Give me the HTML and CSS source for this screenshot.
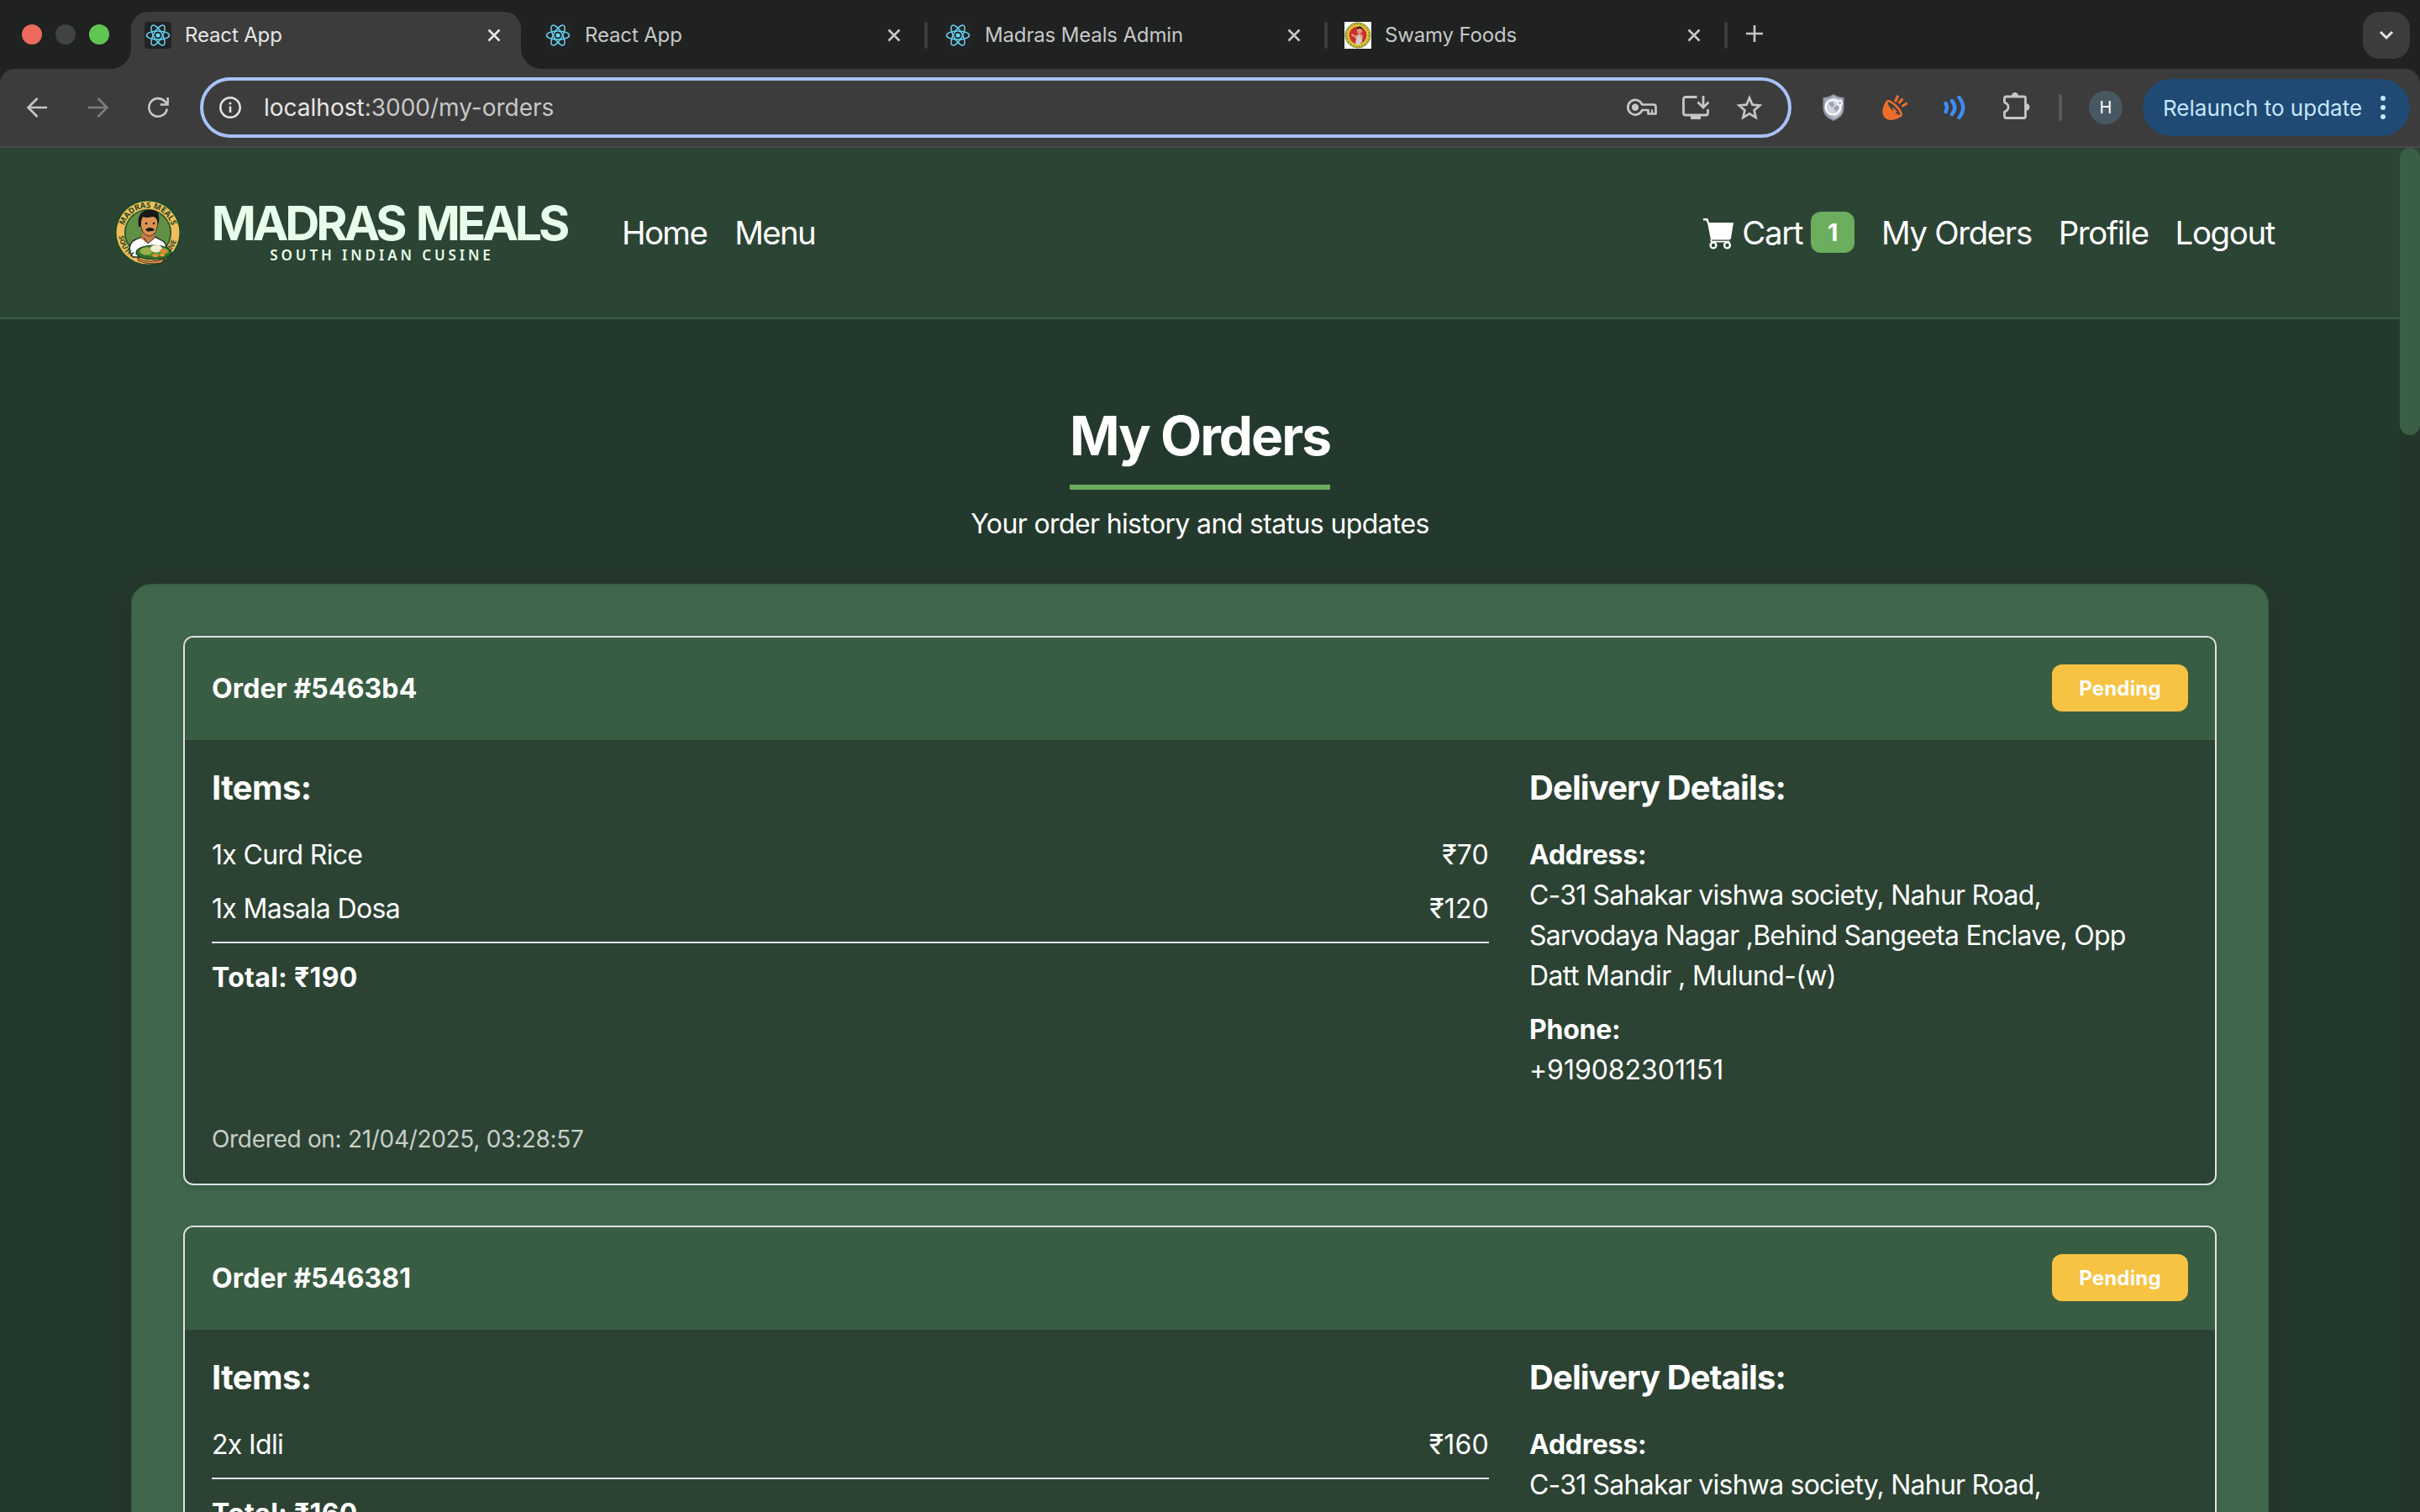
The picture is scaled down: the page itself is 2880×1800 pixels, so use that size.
FILE: index.html
```html
<!DOCTYPE html>
<html lang="en">
<head>
<meta charset="utf-8">
<title>React App</title>
<link rel="stylesheet" href="styles.css">
</head>
<body>
<svg class="defs" width="0" height="0" aria-hidden="true">
  <symbol id="react" viewBox="0 0 32 32">
    <g fill="none" stroke="#67d3f3" stroke-width="1.5">
      <ellipse cx="16" cy="16" rx="13.5" ry="5.1"/>
      <ellipse cx="16" cy="16" rx="13.5" ry="5.1" transform="rotate(60 16 16)"/>
      <ellipse cx="16" cy="16" rx="13.5" ry="5.1" transform="rotate(120 16 16)"/>
    </g>
    <circle cx="16" cy="16" r="2.6" fill="#67d3f3"/>
  </symbol>
  <symbol id="close" viewBox="0 0 16 16"><path d="M1.5 1.5l13 13M14.500 1.500l-13 13" fill="none" stroke="currentColor" stroke-width="2.600"/></symbol>
</svg>

<div class="tabs">
  <div class="lights"><i class="red"></i><i class="gray"></i><i class="green"></i></div>
  <div class="tab active"><svg class="fav"><use href="#react"/></svg><span class="ttl">React App</span><svg class="x"><use href="#close"/></svg></div>
  <div class="sep none"></div>
  <div class="tab"><svg class="fav"><use href="#react"/></svg><span class="ttl">React App</span><svg class="x"><use href="#close"/></svg></div>
  <div class="sep"></div>
  <div class="tab"><svg class="fav"><use href="#react"/></svg><span class="ttl">Madras Meals Admin</span><svg class="x"><use href="#close"/></svg></div>
  <div class="sep"></div>
  <div class="tab">
    <svg class="fav sw" viewBox="0 0 32 32"><rect width="32" height="32" fill="#fff"/><circle cx="16" cy="16" r="15" fill="#e3d23c" stroke="#77752a" stroke-width="1"/><circle cx="16" cy="16" r="13" fill="none" stroke="#8d8528" stroke-width="1.500" stroke-dasharray="2 1.500"/><circle cx="16" cy="16" r="10.500" fill="#cf2f2c"/><path d="M13 27l1-9 3-3 4 2 0 7-3 3z" fill="#cfcbc9"/><circle cx="18" cy="10.500" r="3.200" fill="#d69a74"/><path d="M14.500 9q1-4 4-3.500t3 4l-3-2z" fill="#2a1a18"/><path d="M8.500 15l5 3 5-4M20 15l1 5" fill="none" stroke="#d9a37f" stroke-width="2.200"/></svg>
    <span class="ttl">Swamy Foods</span><svg class="x"><use href="#close"/></svg>
  </div>
  <div class="sep"></div>
  <svg class="plus" viewBox="0 0 20 20"><path d="M10 0v20M0 10h20" stroke="currentColor" stroke-width="2.600"/></svg>
  <div class="more"><svg width="18" height="12" viewBox="0 0 18 12"><path d="M2 2l7 7 7-7" fill="none" stroke="#e3e3e3" stroke-width="3"/></svg></div>
</div>

<div class="toolbar">
  <svg class="back" viewBox="0 0 26 26"><path d="M25 13H3M13.500 2L2.500 13l11 11" fill="none" stroke="#c7c7c7" stroke-width="2.600"/></svg>
  <svg class="fwd" viewBox="0 0 26 26"><path d="M1 13h22M12.500 2l11 11-11 11" fill="none" stroke="#7c7c7c" stroke-width="2.600"/></svg>
  <svg class="reload" viewBox="0 0 26 26"><path d="M23.800 14.500A10.800 10.800 0 1 1 21 5.500L24 9M24.600 1v8.500h-9" fill="none" stroke="#c7c7c7" stroke-width="2.600"/></svg>
  <div class="omni">
    <svg class="info" viewBox="0 0 28 28"><circle cx="14" cy="14" r="11.700" fill="none" stroke="#e3e3e3" stroke-width="2.500"/><path d="M14 12.500v7.500" stroke="#e3e3e3" stroke-width="2.600"/><circle cx="14" cy="9" r="1.600" fill="#e3e3e3"/></svg>
    <span class="url"><b>localhost</b>:3000/my-orders</span>
    <svg class="key" viewBox="0 0 36 22"><path d="M18.300 7.500H32A2.500 2.500 0 0 1 34.500 10v8.500H25.500V14H18.300A8.800 8.800 0 1 1 18.300 7.500z" fill="none" stroke="#c7c7c7" stroke-width="2.700" stroke-linejoin="round"/><path d="M30 13.500v5" stroke="#c7c7c7" stroke-width="2.400"/><circle cx="10" cy="10.800" r="4.200" fill="#c7c7c7"/></svg>
    <svg class="inst" viewBox="0 0 32 28"><path d="M17.500 1.500H4A2.500 2.500 0 0 0 1.500 4v16.500A2.500 2.500 0 0 0 4 23h24a2.500 2.500 0 0 0 2.500-2.500V16" fill="none" stroke="#c7c7c7" stroke-width="2.800"/><path d="M10 23h12v5H10z" fill="#c7c7c7"/><path d="M25 0v13.500M18.500 7.500l6.500 6.500 6.500-6.500" fill="none" stroke="#c7c7c7" stroke-width="2.800"/></svg>
    <svg class="star" viewBox="0 0 32 30"><path d="M16 3.500l3.500 8.200 8.800.8-6.700 5.800 2 8.700L16 22.400l-7.600 4.600 2-8.700-6.700-5.800 8.800-.8z" fill="none" stroke="#c7c7c7" stroke-width="2.700"/></svg>
  </div>
  <svg class="shield" viewBox="0 0 26 32"><path d="M13 0q6 4 12.500 4v13q0 10-12.500 15Q.5 27 .5 17V4Q7 4 13 0z" fill="#8b94a6"/><path d="M13 2q5 3.500 10.500 3.500V17q0 8.500-10.500 13z" fill="#b9bfca"/><path d="M13 2Q8 5.500 2.500 5.500V17q0 8.500 10.500 13z" fill="#a6adbb"/><circle cx="12.500" cy="15.500" r="9" fill="#d0d4dc" stroke="#fff" stroke-width="2"/><path d="M7 11l5-2 2 4-3 3zM13 17l4-4 3 3-4 5z" fill="#98a0b2"/><circle cx="20.500" cy="10.500" r="2.800" fill="#b9bfca" stroke="#fff" stroke-width="1.500"/></svg>
  <svg class="dish" viewBox="0 0 30 30"><path d="M5 7.500C-1 14-1 24 4 28c6 4 14 1 19-3z" fill="#ec6e2d"/><ellipse cx="14" cy="16.300" rx="11.800" ry="4" transform="rotate(46 14 16.300)" fill="#3c3c3c" stroke="#ec6e2d" stroke-width="2.600"/><path d="M12 14l6 6-4 2z" fill="#ec6e2d"/><path d="M16 7l2.200-5M20.500 9l3-3.500M24.500 13l4-2.500" stroke="#ec6e2d" stroke-width="3.200" stroke-linecap="round"/></svg>
  <svg class="wave" viewBox="0 0 26 28"><path d="M2.500 9q3 5 0 10M10 6q6.500 8 0 16M18.500 2q9.500 12 0 24" fill="none" stroke="#3f8cf4" stroke-width="4.400" stroke-linecap="round"/></svg>
  <svg class="puz" viewBox="0 0 34 34"><path d="M4.500 6H25.500q2 0 2 2V29.500q0 2-2 2H4.500q-2 0-2-2V24q4.500-1.500 4.500-5.500t-4.500-5.500V8q0-2 2-2z" fill="none" stroke="#c7c7c7" stroke-width="2.800" stroke-linejoin="round"/><path d="M10.800 5.500q.5-4.500 4.200-4.500t4.200 4.500zM28 14q4.500.8 4.500 4.500T28 23z" fill="#c7c7c7"/></svg>
  <div class="bar"></div>
  <div class="ava">H</div>
  <div class="relaunch"><span class="rl">Relaunch to update</span><div class="dots"><i></i><i></i><i></i></div></div>
</div>

<div class="page">
  <div class="view">
    <header class="nav">
      <svg class="logo" viewBox="0 0 80 80">
        <defs>
          <path id="arcTop" d="M10.500 40a29.500 29.500 0 0 1 59 0"/>
          <path id="arcLeft" d="M5.500 44a35 35 0 0 0 22 29"/>
          <path id="arcRight" d="M66.500 63a35 35 0 0 0 8.500-21"/>
        </defs>
        <circle cx="40" cy="40" r="39.500" fill="#1c4a2a"/><circle cx="40" cy="40" r="37.500" fill="#f0bd58"/><circle cx="40" cy="40" r="28" fill="#1c4a2a"/><circle cx="40" cy="40" r="26.500" fill="#5f9044"/>
        <path d="M18 62q0-12 8-14l10-4 12 1 10 5q4 3 4 9L50 69H22z" fill="#fff" stroke="#20231f" stroke-width="1.300"/>
        <path d="M34 39l-2 8 8 6 8-7-1-8z" fill="#c97a44"/>
        <path d="M31 25q0 18 11 19 10-1 10-20l-7-6-12 3z" fill="#dd9152" stroke="#2a1b14" stroke-width=".8"/>
        <path d="M29 33q-3-18 11-20 13-2 13 8 1 5-1 9-1-9-6-9-9 2-12 0-2 4-3 12z" fill="#17191a"/>
        <path d="M37 36q5-4 11 0-2 3-5 2-4 2-6-2z" fill="#17191a"/><circle cx="38" cy="29" r="1.200"/><circle cx="47" cy="29" r="1.200"/>
        <path d="M35 46l5 7 8-7" fill="none" stroke="#2a2c2a" stroke-width="1"/>
        <path d="M28 70q14 8 32 1l-4 5q-16 3-28-3z" fill="#dd9152" stroke="#2a1b14" stroke-width=".8"/>
        <ellipse cx="47" cy="63.500" rx="21" ry="8.500" fill="#2f6f2b" stroke="#173f1c" stroke-width="1.200"/><ellipse cx="47" cy="62" rx="18" ry="6" fill="#4f9236"/>
        <ellipse cx="38" cy="62" rx="7" ry="4.500" fill="#9fb04a"/><ellipse cx="50" cy="59" rx="7" ry="4.500" fill="#f5ead3"/><ellipse cx="59" cy="62" rx="5" ry="3" fill="#d58e2e"/><ellipse cx="49" cy="67" rx="4" ry="2" fill="#e0912c"/><ellipse cx="57" cy="66.500" rx="3" ry="1.800" fill="#e8a23a"/>
        <g class="ring"><text><textPath href="#arcTop" startOffset="50%" text-anchor="middle">MADRAS MEALS</textPath></text><text class="small"><textPath href="#arcLeft">SOUTH</textPath></text><text class="small"><textPath href="#arcRight">INE</textPath></text></g>
      </svg>
      <div class="brand"><span class="word">MADRAS MEALS</span><span class="sub">SOUTH INDIAN CUSINE</span></div>
      <a class="home">Home</a><a class="menu">Menu</a>
      <div class="right">
        <svg class="cart" viewBox="0 0 36 37"><path d="M0 1.200h4.500l1.300 4" fill="none" stroke="#fff" stroke-width="2.400"/><path d="M5 5h31l-3 18.500q-.4 2-2.400 2H11q-2 0-2.400-2z" fill="#fff"/><path d="M9 25l.8 2.600H31.500" fill="none" stroke="#fff" stroke-width="1.800"/><circle cx="12" cy="32" r="3.400" fill="none" stroke="#fff" stroke-width="2.400"/><circle cx="28.500" cy="32" r="3.400" fill="none" stroke="#fff" stroke-width="2.400"/></svg>
        <a class="cart-link">Cart</a><span class="count">1</span><a class="link">My Orders</a><a class="link">Profile</a><a class="link">Logout</a>
      </div>
    </header>
    <main>
      <h1>My Orders</h1>
      <p class="lead">Your order history and status updates</p>
      <section class="panel">
        <article class="order">
          <div class="head"><strong>Order #5463b4</strong><span class="badge">Pending</span></div>
          <div class="body">
            <div class="cols">
              <div class="items">
                <h2>Items:</h2>
                <div class="row"><span>1x Curd Rice</span><span class="price">₹70</span></div>
                <div class="row"><span>1x Masala Dosa</span><span class="price">₹120</span></div>
                <div class="total"><strong>Total: ₹190</strong></div>
              </div>
              <div class="delivery">
                <h2>Delivery Details:</h2>
                <p><strong>Address:</strong><br>C-31 Sahakar vishwa society, Nahur Road,<br>Sarvodaya Nagar ,Behind Sangeeta Enclave, Opp<br><span class="last">Datt Mandir , Mulund-(w)</span></p>
                <p><strong>Phone:</strong><br><span class="phone">+919082301151</span></p>
              </div>
            </div>
            <div class="date">Ordered on: 21/04/2025, 03:28:57</div>
          </div>
        </article>
        <article class="order">
          <div class="head"><strong>Order #546381</strong><span class="badge">Pending</span></div>
          <div class="body">
            <div class="cols">
              <div class="items">
                <h2>Items:</h2>
                <div class="row"><span>2x Idli</span><span class="price">₹160</span></div>
                <div class="total"><strong>Total: ₹160</strong></div>
              </div>
              <div class="delivery">
                <h2>Delivery Details:</h2>
                <p><strong>Address:</strong><br>C-31 Sahakar vishwa society, Nahur Road,</p>
              </div>
            </div>
          </div>
        </article>
      </section>
    </main>
  </div>
  <div class="scroll"><div class="thumb"></div></div>
</div>
</body>
</html>
```
FILE: styles.css
```css
* { box-sizing: border-box; }
body { margin: 0; width: 2880px; height: 1800px; overflow: hidden; display: flex; flex-direction: column; background: #1f2221; font-family: Inter, "Liberation Sans", sans-serif; }
svg { display: block; flex: none; }
.defs { position: absolute; }

/* tab strip */
.tabs { height: 82px; flex: none; display: flex; align-items: flex-start; padding: 14px 12px 0 0; color: #c7c7c7; }
.lights { width: 156px; height: 54px; flex: none; display: flex; align-items: center; gap: 16px; padding-left: 26px; }
.lights i { width: 24px; height: 24px; border-radius: 50%; }
.red { background: #ed6a5e; }
.gray { background: #414443; }
.green { background: #61c554; }
.tab { position: relative; width: 464px; height: 56px; flex: none; display: flex; align-items: center; padding: 0 24px 0 16px; }
.tab.active { height: 68px; padding-bottom: 12px; background: #3c3c3c; border-radius: 20px 20px 0 0; color: #e6e6e6; }
.tab.active::before, .tab.active::after { content: ""; position: absolute; bottom: 0; width: 24px; height: 24px; }
.tab.active::before { left: -24px; background: radial-gradient(circle at 0 0, transparent 23.500px, #3c3c3c 24px); }
.tab.active::after { right: -24px; background: radial-gradient(circle at 100% 0, transparent 23.500px, #3c3c3c 24px); }
.fav { width: 32px; height: 32px; background: #232323; border-radius: 4px; }
.sw { border-radius: 0; }
.ttl { margin-left: 16px; font-size: 24px; line-height: 32px; letter-spacing: -.15px; white-space: nowrap; }
.x { width: 16px; height: 16px; margin-left: auto; }
.sep { width: 4px; height: 32px; flex: none; margin: 12px 4px 0; background: #3c3c3c; border-radius: 2px; }
.sep.none { visibility: hidden; }
.plus { width: 20px; height: 20px; margin: 16px 0 0 18px; }
.more { width: 56px; height: 56px; margin-left: auto; border-radius: 20px; background: #3c3c3c; display: flex; align-items: center; justify-content: center; }

/* toolbar */
.toolbar { height: 94px; flex: none; display: flex; align-items: center; padding: 0 12px 0 31px; background: #3c3c3c; border-bottom: 2px solid #4a4a4a; border-radius: 18px 18px 0 0; }
.back, .fwd, .reload { width: 26px; height: 26px; }
.fwd { margin-left: 47px; }
.reload { margin-left: 45px; }
.omni { width: 1894px; height: 72px; flex: none; margin-left: 37px; border: 4px solid #a8c1f8; border-radius: 36px; display: flex; align-items: center; padding: 0 30px 0 18px; }
.info { width: 28px; height: 28px; }
.url { margin-left: 26px; font-size: 28px; line-height: 36px; color: #c7c7c7; white-space: nowrap; }
.url b { font-weight: 400; color: #e6e6e6; }
.key { width: 36px; height: 22px; margin-left: auto; }
.inst { width: 32px; height: 28px; margin-left: 30px; }
.star { width: 32px; height: 30px; margin-left: 32px; }
.shield { width: 26px; height: 32px; margin-left: 37px; }
.dish { width: 30px; height: 30px; margin-left: 45px; }
.wave { width: 26px; height: 28px; margin-left: 43px; }
.puz { width: 34px; height: 34px; margin: -4px 0 0 44px; }
.bar { width: 4px; height: 32px; margin-left: 33px; background: #5a5a5a; border-radius: 2px; }
.ava { width: 40px; height: 40px; margin-left: 32px; border-radius: 50%; background: #475862; color: #fff; font-size: 20px; line-height: 40px; text-align: center; }
.relaunch { width: 318px; height: 68px; margin-left: auto; border-radius: 34px; background: #1f4a74; color: #c5e6fb; display: flex; align-items: center; padding: 0 29px 0 24px; }
.rl { font-size: 26px; line-height: 36px; padding-top: 1px; white-space: nowrap; }
.dots { display: flex; flex-direction: column; gap: 5px; margin-left: auto; }
.dots i { width: 6px; height: 6px; border-radius: 50%; background: #c5e6fb; }

/* page */
.page { flex: 1; min-height: 0; display: flex; background: #24392d; color: #fff; }
.view { width: 2856px; height: 1624px; overflow: hidden; }
.scroll { width: 24px; background: linear-gradient(#2c4433 0, #2c4433 60px, #22362b 300px); }
.thumb { height: 342px; border-radius: 12px; background: #3a5f44; }
.nav { height: 204px; display: flex; align-items: flex-start; padding: 61px 149px 0 136px; background: #2c4433; border-bottom: 2px solid #3a5f44; }
.logo { width: 80px; height: 80px; }
.ring text { font: 700 9.500px "Noto Sans", sans-serif; letter-spacing: .1px; fill: #1c4a2a; }
.ring .small { font-size: 8.500px; }
.brand { width: 424px; margin: 5px 0 0 35px; display: flex; flex-direction: column; align-items: center; color: #e8fdea; white-space: nowrap; }
.word { font-size: 57px; line-height: 48px; font-weight: 700; letter-spacing: -4.100px; word-spacing: 5px; }
.sub { font: 600 17px/22px "Noto Sans", sans-serif; letter-spacing: 3.900px; margin: 3px 0 0 -17px; }
.nav a { font-size: 38.400px; line-height: 48px; margin-top: 16px; letter-spacing: -1.350px; white-space: nowrap; }
.nav .home, .nav .menu { letter-spacing: -1.600px; }
.home { margin-left: 65px; }
.menu { margin-left: 33px; }
.right { display: flex; margin-left: auto; }
.cart { width: 36px; height: 37px; margin-top: 23px; }
.cart-link { margin-left: 10px; }
.count { width: 52px; height: 49px; margin: 15px 0 0 10px; background: #6aae5e; border-radius: 12px; font-size: 28.800px; font-weight: 700; line-height: 49px; text-align: center; }
.link { margin-left: 31.800px; }
main { padding: 96px 156px 0; display: flex; flex-direction: column; align-items: center; }
h1 { margin: 0; height: 107px; padding-top: 4px; border-bottom: 6px solid #6aae5e; font-size: 64px; line-height: 77px; font-weight: 700; letter-spacing: -2px; white-space: nowrap; }
.lead { margin: 17px 0 0; font-size: 32px; line-height: 48px; letter-spacing: -.630px; white-space: nowrap; }
.panel { width: 2544px; margin-top: 47px; padding: 60px; border: 2px solid #3a5f44; border-radius: 24px; background: #40664c; box-shadow: 0 8px 48px rgba(0, 0, 0, .15); }
.order { margin-bottom: 48px; border: 2px solid #dee2e6; border-radius: 12px; background: #2c4333; box-shadow: 0 4px 8px rgba(0, 0, 0, .1); overflow: hidden; font-size: 32px; line-height: 48px; letter-spacing: -.780px; }
.head { height: 122px; padding: 0 32px 2px; display: flex; align-items: center; justify-content: space-between; background: #395d43; letter-spacing: .12px; }
.head strong { padding-top: 2px; }
.badge { width: 162px; height: 56px; border-radius: 12px; background: #f6c343; font-size: 24px; font-weight: 700; line-height: 57px; letter-spacing: .2px; text-align: center; }
.body { padding: 33px 32px 32px; }
.cols { display: grid; grid-template-columns: 1520px 1fr; column-gap: 48px; }
h2 { margin: 0 0 32px; font-size: 40px; line-height: 48px; font-weight: 700; letter-spacing: -.900px; white-space: nowrap; }
.items h2 { letter-spacing: -.600px; }
.row { display: flex; justify-content: space-between; margin-bottom: 16px; letter-spacing: -.650px; }
.price { letter-spacing: .2px; }
.total { margin-top: -17px; border-top: 2px solid #dee2e6; padding-top: 17px; letter-spacing: .3px; }
.row:nth-last-child(2) { padding-bottom: 16px; }
.delivery p { margin: 0 0 16px; white-space: nowrap; }
.delivery strong { letter-spacing: -.250px; }
.phone { letter-spacing: -.05px; }
.last { letter-spacing: -.620px; }
.date { margin-top: 21px; font-size: 28px; line-height: 42px; letter-spacing: -.310px; color: #c8cfca; }
```
